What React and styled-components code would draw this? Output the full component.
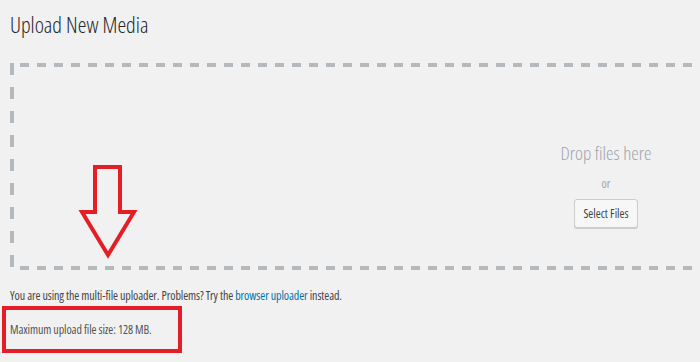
import React from 'react'
import styled, { createGlobalStyle } from 'styled-components'

const GlobalStyle = createGlobalStyle`
  html, body {
    margin: 0;
    padding: 0;
    background: #f1f1f1;
    overflow: hidden;
  }
  body {
    font-family: "Open Sans", "Noto Sans", sans-serif;
    font-stretch: 75%;
    color: #444;
  }
`

const Page = styled.div`
  width: 700px;
  height: 362px;
  overflow: hidden;
  position: relative;
  padding: 0 0 0 10px;
  box-sizing: border-box;
`

const Title = styled.h1`
  margin: 0;
  padding-top: 9px;
  font-size: 22px;
  font-weight: 350;
  color: #23282d;
  line-height: 30px;
`

const DropZone = styled.div`
  margin-top: 24px;
  width: 1192px;
  height: 207px;
  box-sizing: border-box;
  display: flex;
  flex-direction: column;
  align-items: center;
  justify-content: center;
  padding-top: 35px;
  background:
    repeating-linear-gradient(90deg, #b4b9be 0 9px, transparent 9px 17px) 10px 0 / 100% 4px no-repeat,
    repeating-linear-gradient(90deg, #b4b9be 0 9px, transparent 9px 17px) 10px 100% / 100% 4px no-repeat,
    repeating-linear-gradient(180deg, #b4b9be 0 12px, transparent 12px 24px) 0 0 / 4px 100% no-repeat;
`

const DropText = styled.div`
  font-size: 19px;
  font-weight: 330;
  color: #a0a5aa;
  line-height: 24px;
`

const OrText = styled.div`
  font-size: 12px;
  color: #a0a5aa;
  margin: 12px 0 8px;
  line-height: 14px;
`

const SelectButton = styled.button`
  font-family: inherit;
  font-stretch: inherit;
  font-size: 12px;
  color: #444;
  height: 29px;
  padding: 0 8px;
  background: #f7f7f7;
  border: 1px solid #ccc;
  border-radius: 3px;
  box-shadow: 0 1px 0 #ccc;
`

const Note = styled.p`
  margin: 18px 0 0;
  font-size: 12px;
  letter-spacing: -0.1px;
  line-height: 16px;
  color: #444;
`

const Link = styled.a`
  color: #0073aa;
  text-decoration: none;
`

const Highlight = styled.div`
  margin: 2px 0 0 -8px;
  width: 180px;
  height: 47px;
  box-sizing: border-box;
  border: 4px solid #e31e26;
  display: flex;
  align-items: center;
  padding-left: 4px;
  font-size: 12px;
  letter-spacing: -0.1px;
  color: #555;
`

const Arrow = styled.svg`
  position: absolute;
  left: 78px;
  top: 163px;
`

export default function App() {
  return (
    <>
      <GlobalStyle />
      <Page>
        <Title>Upload New Media</Title>
        <DropZone>
          <DropText>Drop files here</DropText>
          <OrText>or</OrText>
          <SelectButton>Select Files</SelectButton>
        </DropZone>
        <Note>
          You are using the multi-file uploader. Problems? Try the <Link href="#">browser uploader</Link> instead.
        </Note>
        <Highlight>Maximum upload file size: 128 MB.</Highlight>
        <Arrow width="60" height="100" viewBox="78 163 60 100">
          <path
            d="M95 167 H120 V212 H134 L108 255 L82 212 H95 Z"
            fill="none"
            stroke="#e31e26"
            strokeWidth="4"
            strokeLinejoin="miter"
          />
        </Arrow>
      </Page>
    </>
  )
}
